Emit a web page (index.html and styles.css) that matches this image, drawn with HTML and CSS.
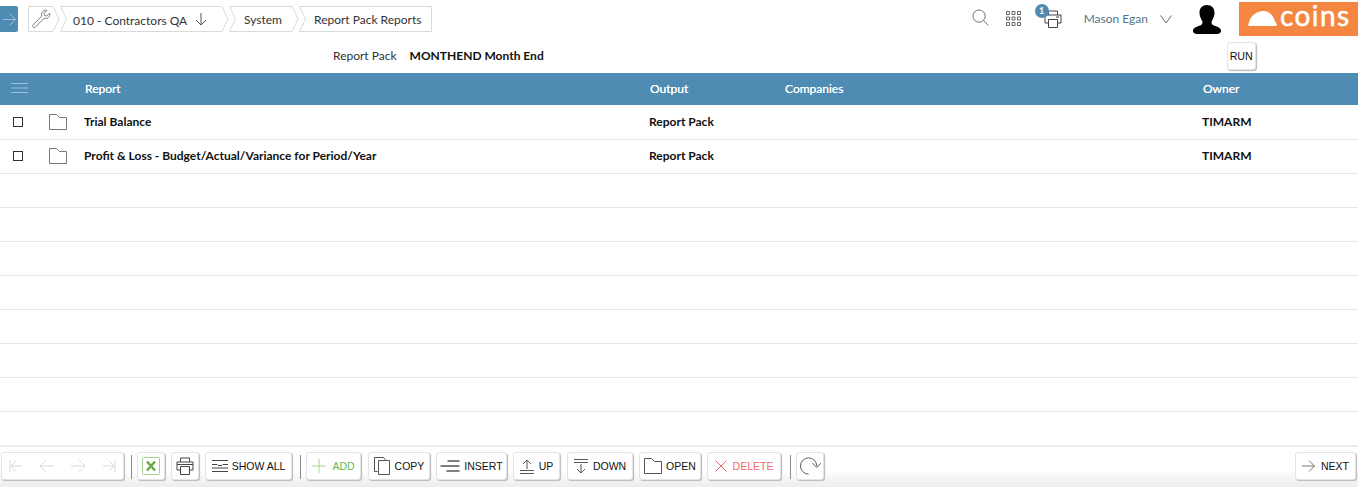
FILE: index.html
```html
<!DOCTYPE html>
<html lang="en">
<head>
<meta charset="utf-8">
<title>Report Pack Reports</title>
<link rel="stylesheet" href="styles.css">
</head>
<body>
<div class="page">
  <header class="topbar">
    <button class="menu-toggle" type="button">
      <svg width="18" height="26" viewBox="0 0 18 26" fill="none" stroke="#9cc0d8" stroke-width="1"><path d="M3 13.500h12M10 8l5.500 5.500L10 19"/></svg>
    </button>
    <nav class="crumbs">
      <div class="crumb crumb-home">
        <svg class="crumb-shape" width="32" height="26" viewBox="0 0 32 26"><path d="M.5.5H25L31 13l-6 12.500H.5z"/></svg>
        <svg class="crumb-icon" width="20" height="20" viewBox="0 0 20 20" fill="none" stroke="#77707f" stroke-width=".9"><path d="M1.500 16.500 10.700 7.200C10 4.500 11 2.500 13 1.500c1-.4 2-.5 3-.2l-3 3 .5 2.200 2.200.5 3-3c.3 1 .2 2.200-.3 3.200-1 1.800-3 2.700-5.300 2L4 18.500c-1 .8-2.800-.8-2.500-2z"/></svg>
      </div>
      <div class="crumb crumb-company">
        <svg class="crumb-shape" width="169" height="26" viewBox="0 0 169 26"><path d="M.5.5H162l6 12.500-6 12.500H.5L6.500 13z"/></svg>
        <span class="crumb-label">010 - Contractors QA</span>
        <svg class="crumb-arrow" width="14" height="14" viewBox="0 0 14 14" fill="none" stroke="#555"><path d="M7 1v12M2 8l5 5 5-5"/></svg>
      </div>
      <div class="crumb crumb-system">
        <svg class="crumb-shape" width="70" height="26" viewBox="0 0 70 26"><path d="M.5.5H63l6 12.500-6 12.500H.5L6.500 13z"/></svg>
        <span class="crumb-label">System</span>
      </div>
      <div class="crumb crumb-page">
        <svg class="crumb-shape" width="133" height="26" viewBox="0 0 133 26"><path d="M.5.5H132.500V25.500H.5L6.500 13z"/></svg>
        <span class="crumb-label">Report Pack Reports</span>
      </div>
    </nav>
    <div class="top-tools">
      <svg class="tool-search" width="17" height="17" viewBox="0 0 18 18" fill="none" stroke="#666"><circle cx="7.500" cy="7.500" r="6.500"/><path d="m12.300 12.300 5 5"/></svg>
      <svg class="tool-grid" width="15" height="15" viewBox="0 0 15 15" fill="none" stroke="#666"><path d="M.5.5h3v3h-3zM6 .5h3v3H6zM11.500.5h3v3h-3zM.5 6h3v3h-3zM6 6h3v3H6zM11.500 6h3v3h-3zM.5 11.500h3v3h-3zM6 11.500h3v3H6zM11.500 11.500h3v3h-3z"/></svg>
      <div class="tool-print">
        <svg width="18" height="18" viewBox="0 0 18 18" fill="none" stroke="#444"><path d="M4.500 5V1h9v4M4.500 13H1V5h16v8h-3.500M4.500 9.500h9v8h-9zM12 7h3"/></svg>
        <span class="badge">1</span>
      </div>
      <span class="user-name">Mason Egan</span>
      <svg class="user-caret" width="12" height="9" viewBox="0 0 12 9" fill="none" stroke="#666"><path d="m.5.5 5.500 7.500L11.500.5"/></svg>
      <svg class="avatar" width="28" height="29" viewBox="0 0 28 30" fill="#000" preserveAspectRatio="none"><path d="M14 0c4.500 0 7.500 3 7.500 8 0 2-.5 4-1.300 5.700-.7 1.600-1.700 3-1.700 4.300 0 2 1.500 2.700 4 3.700 3 1.200 5.500 2.300 5.500 5.300 0 1.800-1.500 3-4 3H4c-2.500 0-4-1.200-4-3 0-3 2.500-4.100 5.500-5.300 2.500-1 4-1.700 4-3.700 0-1.300-1-2.700-1.700-4.300C7 12 6.500 10 6.500 8c0-5 3-8 7.500-8z"/></svg>
      <div class="logo">
        <svg width="29" height="15" viewBox="0 0 28 17" fill="#fff" preserveAspectRatio="none"><path d="M1 17C0 17 0 15 1 13 2 6 8 0 15 0c6 0 10 6 11 12l2 3c0 2-1 2-2 2z"/></svg>
        <span class="logo-text">coins</span>
      </div>
    </div>
  </header>

  <section class="pack-row">
    <span class="pack-label">Report Pack</span>
    <span class="pack-value">MONTHEND Month End</span>
    <button class="btn btn-run" type="button">RUN</button>
  </section>

  <main class="grid">
    <div class="row head">
      <div class="cell-check">
        <svg width="18" height="12" viewBox="0 0 18 12" fill="none" stroke="#9cc0d8"><path d="M0 1.500h17M0 6h17M0 10.500h17"/></svg>
      </div>
      <div></div>
      <div class="col">Report</div>
      <div class="col">Output</div>
      <div class="col">Companies</div>
      <div class="col">Owner</div>
    </div>
    <div class="row data">
      <div class="cell-check"><span class="check"></span></div>
      <div class="cell-folder"><svg width="18" height="16" viewBox="0 0 18 16" fill="none" stroke="#777"><path d="M.5 15.500V.500h7l3 3h7v12z"/></svg></div>
      <div class="col">Trial Balance</div>
      <div class="col">Report Pack</div>
      <div class="col"></div>
      <div class="col">TIMARM</div>
    </div>
    <div class="row data">
      <div class="cell-check"><span class="check"></span></div>
      <div class="cell-folder"><svg width="18" height="16" viewBox="0 0 18 16" fill="none" stroke="#777"><path d="M.5 15.500V.500h7l3 3h7v12z"/></svg></div>
      <div class="col">Profit &amp; Loss - Budget/Actual/Variance for Period/Year</div>
      <div class="col">Report Pack</div>
      <div class="col"></div>
      <div class="col">TIMARM</div>
    </div>
    <div class="row empty"></div>
    <div class="row empty"></div>
    <div class="row empty"></div>
    <div class="row empty"></div>
    <div class="row empty"></div>
    <div class="row empty"></div>
    <div class="row empty"></div>
    <div class="row empty"></div>
  </main>

  <footer class="toolbar">
    <div class="btn btn-nav">
      <svg width="14" height="14" viewBox="0 0 14 14" fill="none" stroke="#d9d9d9"><path d="M1 1v12M13 7H2M7 2 2 7l5 5"/></svg>
      <svg width="16" height="14" viewBox="0 0 16 14" fill="none" stroke="#d9d9d9"><path d="M15 7H1M7 1 1 7l6 6"/></svg>
      <svg width="16" height="14" viewBox="0 0 16 14" fill="none" stroke="#d9d9d9"><path d="M1 7h14M9 1l6 6-6 6"/></svg>
      <svg width="14" height="14" viewBox="0 0 14 14" fill="none" stroke="#d9d9d9"><path d="M13 1v12M1 7h11M7 2l5 5-5 5"/></svg>
    </div>
    <span class="sep sep-first"></span>
    <button class="btn btn-square" type="button">
      <svg width="18" height="18" viewBox="0 0 18 18"><rect x=".5" y=".5" width="17" height="17" rx="1" fill="#fff" stroke="#a9cf8f"/><path d="m5 4.500 8 9M13 4.500l-8 9" stroke="#6fa844" stroke-width="2.600" fill="none"/></svg>
    </button>
    <button class="btn btn-square" type="button">
      <svg width="18" height="18" viewBox="0 0 18 18" fill="none" stroke="#444"><path d="M4.500 5V1h9v4M4.500 13H1V5h16v8h-3.500M4.500 9.500h9v8h-9zM1 7.500h16"/></svg>
    </button>
    <button class="btn btn-showall" type="button">
      <svg width="16" height="12" viewBox="0 0 16 12" fill="none" stroke="#444"><path d="M0 .5h16M0 4.500h5.500M10.500 4.500H16M6 5.500h4M0 8h16M0 11.500h16"/></svg>
      SHOW ALL
    </button>
    <span class="sep sep-mid"></span>
    <button class="btn btn-add" type="button">
      <svg width="14" height="14" viewBox="0 0 14 14" fill="none" stroke="#a6d68f"><path d="M7 0v14M0 7h14"/></svg>
      ADD
    </button>
    <button class="btn btn-copy" type="button">
      <svg width="16" height="18" viewBox="0 0 16 18" fill="none" stroke="#555"><path d="M3.500 14.500H.5V.5h9l2 2.500"/><path d="M4.500 3.500h11v14h-11z"/></svg>
      COPY
    </button>
    <button class="btn btn-insert" type="button">
      <svg width="20" height="12" viewBox="0 0 19 12" fill="none" stroke="#555" stroke-width="1.400"><path d="M7 1h12M0 6h19M6 11h13"/></svg>
      INSERT
    </button>
    <button class="btn btn-up" type="button">
      <svg width="14" height="15" viewBox="0 0 14 15" fill="none" stroke="#555"><path d="M7 10V1M3 5l4-4 4 4M0 11.500h14M0 14.500h14"/></svg>
      UP
    </button>
    <button class="btn btn-down" type="button">
      <svg width="14" height="15" viewBox="0 0 14 15" fill="none" stroke="#555"><path d="M0 .5h14M0 3.500h14M7 5v9M3 10l4 4 4-4"/></svg>
      DOWN
    </button>
    <button class="btn btn-open" type="button">
      <svg width="18" height="16" viewBox="0 0 18 16" fill="none" stroke="#555"><path d="M.5 15.500V.500h7l3 3h7v12z"/></svg>
      OPEN
    </button>
    <button class="btn btn-delete" type="button">
      <svg width="12" height="12" viewBox="0 0 12 12" fill="none" stroke="#f26a6a"><path d="m.5.5 11 11M11.500.5l-11 11"/></svg>
      DELETE
    </button>
    <span class="sep sep-last"></span>
    <button class="btn btn-square" type="button">
      <svg width="21" height="18" viewBox="0 0 22 18" fill="none" stroke="#555"><path d="M9 17.500A8.500 8.500 0 1 1 17.500 9M13 6l4.500 4.500L22 6"/></svg>
    </button>
    <button class="btn btn-next" type="button">
      <svg width="13" height="12" viewBox="0 0 13 12" fill="none" stroke="#777"><path d="M0 6h12.500M7 .5 12.500 6 7 11.500"/></svg>
      NEXT
    </button>
  </footer>
</div>
</body>
</html>
```

FILE: styles.css
```css
* { box-sizing: border-box; }

html, body {
  margin: 0;
  height: 100%;
  background: #fff;
}

body {
  font-family: Lato, "Liberation Sans", sans-serif;
  font-size: 12px;
  color: #333;
  overflow: hidden;
}

svg { display: block; flex: none; }

.page {
  width: 1358px;
  height: 487px;
  display: flex;
  flex-direction: column;
}

/* Top bar */
.topbar {
  height: 37px;
  display: flex;
  align-items: flex-start;
}

.menu-toggle {
  width: 18px;
  height: 26px;
  margin-top: 6px;
  padding: 0;
  border: 0;
  border-radius: 0 2px 2px 0;
  background: #4f8cb3;
}

.crumbs {
  display: flex;
  margin: 6px 0 0 10px;
}

.crumb {
  position: relative;
  height: 26px;
  display: flex;
  align-items: center;
}

.crumb-shape {
  position: absolute;
  left: 0;
  top: 0;
  fill: #fff;
  stroke: #d9d9d9;
}

.crumb-label, .crumb-icon, .crumb-arrow { position: relative; }

.crumb-home { width: 32px; padding-left: 3px; }
.crumb-company { width: 169px; padding-left: 13px; }
.crumb-company .crumb-label { padding-top: 2px; }
.crumb-system { width: 70px; padding-left: 15px; }
.crumb-page { width: 133px; padding-left: 15px; }
.crumb-arrow { margin-left: 7px; }

.top-tools {
  margin-left: auto;
  display: flex;
  align-items: flex-start;
}

.tool-search { margin: 9px 0 0 0; }
.tool-grid { margin: 11px 0 0 17px; }

.tool-print {
  position: relative;
  margin: 10px 0 0 23px;
}

.badge {
  position: absolute;
  left: -9px;
  top: -6px;
  width: 14px;
  height: 14px;
  border-radius: 50%;
  background: #4f8cb3;
  color: #fff;
  font-size: 9px;
  font-weight: 700;
  line-height: 14px;
  text-align: center;
}

.user-name {
  margin: 10px 0 0 22px;
  color: #56748a;
  line-height: 18px;
}

.user-caret { margin: 15px 0 0 12px; }
.avatar { margin: 5px 0 0 21px; }

.logo {
  width: 119px;
  height: 34px;
  margin: 2px 0 0 18px;
  padding: 9px 0 0 9px;
  background: #f58642;
  display: flex;
  gap: 3px;
  align-items: flex-start;
}

.logo-text {
  margin-top: -4px;
  color: #fff;
  font-size: 28px;
  font-weight: 400;
  line-height: 17px;
  letter-spacing: 1.4px;
  -webkit-text-stroke: .5px #fff;
}

/* Report pack row */
.pack-row {
  height: 36px;
  display: flex;
  align-items: flex-start;
  padding: 5px 0 0 333px;
}

.pack-label, .pack-value { line-height: 28px; }
.pack-value { margin-left: 13px; color: #111; font-weight: 700; }

/* Shared raised button */
.btn {
  height: 28px;
  padding: 0;
  display: flex;
  align-items: center;
  justify-content: center;
  gap: 4px;
  flex: none;
  background: #fff;
  border: 1px solid #e4e4e4;
  border-radius: 3px;
  box-shadow: 1px 1px 1px #b9b9b9;
  font-family: "Liberation Sans", Arial, sans-serif;
  font-size: 10.5px;
  color: #111;
}

.btn-run { width: 29px; margin-left: 683px; font-size: 8pt; }

/* Table */
.grid { flex: 1; min-height: 0; }

.row {
  display: grid;
  grid-template-columns: 48px 36px 565px 135px 418px 1fr;
  align-items: center;
}

.head {
  height: 33px;
  padding-bottom: 2px;
  border-bottom: 1px solid #fff;
  background: #4f8cb3;
  color: #fff;
  text-shadow: 0 0 .4px #fff;
}

.head .col { padding-left: 1px; }

.head .cell-check svg { margin-left: 11px; }

.data, .empty {
  height: 34px;
  border-bottom: 1px solid #e6e6e6;
}

.data { padding-bottom: 2px; }

.data .col {
  color: #111;
  font-weight: 700;
}

.check {
  display: block;
  width: 10px;
  height: 10px;
  margin-left: 13px;
  border: 1px solid #333;
}

.cell-folder { padding-left: 1px; }

/* Bottom toolbar */
.toolbar {
  height: 42px;
  border-top: 2px solid #ececec;
  padding: 5px 2px 0 1px;
  display: flex;
  align-items: flex-start;
  gap: 6px;
  background: linear-gradient(#fff 55%, #ededed);
}

.btn-nav {
  width: 123px;
  padding: 0 7px;
  justify-content: space-between;
}

.sep {
  width: 1px;
  height: 24px;
  margin-top: 3px;
  margin-right: -1px;
  background: #8a8a8a;
}

.sep-first { margin-left: 1px; }
.sep-mid { margin-left: 2px; }
.sep-last { margin-left: 2px; }

.btn-square { width: 28px; }
.btn-showall { width: 87px; }
.btn-add { width: 55px; gap: 6px; color: #69b84e; margin-right: 1px; }
.btn-copy { width: 62px; gap: 5px; }
.btn-insert { width: 71px; }
.btn-up { width: 47px; gap: 5px; margin-right: 1px; }
.btn-down { width: 66px; gap: 5px; }
.btn-open { width: 62px; }
.btn-delete { width: 74px; gap: 6px; color: #f26a6a; margin-right: 1px; }
.btn-next { width: 61px; margin-left: auto; gap: 6px; }
```
